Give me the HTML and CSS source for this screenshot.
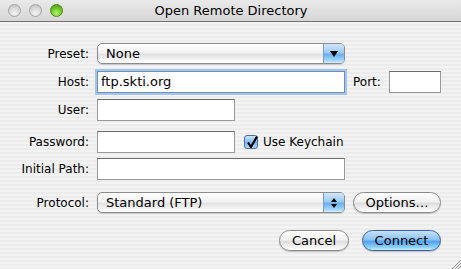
FILE: index.html
```html
<!DOCTYPE html>
<html lang="en">
<head>
  <meta charset="UTF-8">
  <title>Open Remote Directory</title>
  <link rel="stylesheet" href="styles.css">
</head>
<body>
  <div class="window">
    <div class="titlebar">
      <div class="lights">
        <span class="light"></span>
        <span class="light"></span>
        <span class="light green"></span>
      </div>
      <div class="title">Open Remote Directory</div>
    </div>

    <form class="content">
      <div class="row row-preset">
        <label class="lbl">Preset:</label>
        <div class="popup wide">
          <span class="popup-text">None</span>
          <span class="popup-arrow">
            <svg width="10" height="8" viewBox="0 0 10 8"><path d="M1 1 L9 1 L5 7 Z" fill="#000"/></svg>
          </span>
        </div>
      </div>

      <div class="row row-host">
        <label class="lbl">Host:</label>
        <div class="field wide focused">ftp.skti.org</div>
        <label class="lbl-inline">Port:</label>
        <div class="field port"></div>
      </div>

      <div class="row row-user">
        <label class="lbl">User:</label>
        <div class="field short"></div>
      </div>

      <div class="row row-pass">
        <label class="lbl">Password:</label>
        <div class="field short"></div>
        <span class="check">
          <svg width="14" height="14" viewBox="0 0 14 14"><path d="M3 6.5 L6 11 L12 0.5" fill="none" stroke="#000" stroke-width="2.2" stroke-linejoin="round"/></svg>
        </span>
        <span class="check-label">Use Keychain</span>
      </div>

      <div class="row row-path">
        <label class="lbl">Initial Path:</label>
        <div class="field wide"></div>
      </div>

      <div class="row row-proto">
        <label class="lbl">Protocol:</label>
        <div class="popup wide">
          <span class="popup-text">Standard (FTP)</span>
          <span class="popup-arrow">
            <svg width="10" height="14" viewBox="0 0 10 14"><path d="M5 2 L8 6 L2 6 Z M5 12 L8 8 L2 8 Z" fill="#000"/></svg>
          </span>
        </div>
        <button type="button" class="btn options">Options…</button>
      </div>

      <div class="actions">
        <button type="button" class="btn cancel">Cancel</button>
        <button type="button" class="btn connect">Connect</button>
      </div>
    </form>

    <svg class="grip" width="10" height="10" viewBox="0 0 10 10">
      <path d="M10 1 L1 10 M10 4 L4 10 M10 7 L7 10" stroke="#8a8a8a" stroke-width="1"/>
    </svg>
  </div>
</body>
</html>
```

FILE: styles.css
```css
* {
  box-sizing: border-box;
  margin: 0;
  padding: 0;
}
body {
  font-family: "DejaVu Sans", "Liberation Sans", sans-serif;
  font-size: 12px;
  color: #000;
  width: 461px;
  height: 269px;
  overflow: hidden;
}
.window {
  position: relative;
  width: 461px;
  height: 269px;
  background: repeating-linear-gradient(#ececec 0, #ececec 2px, #f3f3f3 2px, #f3f3f3 4px);
}
.titlebar {
  height: 22px;
  display: flex;
  align-items: center;
  background: linear-gradient(#eaeaea, #d6d6d6);
  border-bottom: 1px solid #727272;
  position: relative;
}
.lights {
  display: flex;
  gap: 8px;
  padding-left: 8px;
}
.light {
  width: 13px;
  height: 13px;
  border-radius: 50%;
  border: 1px solid #a5a5a5;
  background: radial-gradient(circle at 50% 75%, #f4f4f4 0, #d8d8d8 55%, #b8b8b8 100%);
}
.light.green {
  border-color: #4c8a1e;
  background: radial-gradient(circle at 50% 75%, #b8f078 0, #72c928 50%, #3f8c10 100%);
}
.title {
  flex: 1;
  text-align: center;
  font-size: 13px;
  margin-right: 62px;
}
.content {
  display: flex;
  flex-direction: column;
}
.row {
  display: flex;
  align-items: center;
}
.lbl {
  width: 89px;
  text-align: right;
  margin-right: 8px;
}
.row-preset { margin-top: 21px; height: 21px; }
.row-host { margin-top: 7px; height: 22px; }
.row-user { margin-top: 6px; height: 22px; }
.row-pass { margin-top: 10px; height: 22px; }
.row-path { margin-top: 5px; height: 22px; }
.row-proto { margin-top: 12px; height: 21px; }

.field {
  height: 22px;
  background: #fff;
  border: 1px solid #9a9a9a;
  border-top-color: #6c6c6c;
  padding: 0 3px;
  line-height: 20px;
  font-size: 13px;
}
.field.wide { width: 248px; }
.field.short { width: 138px; }
.field.port { width: 52px; }
.field.focused {
  border-color: #6d8fc0;
  box-shadow: 0 0 0 2px #a6c4e8;
}
.lbl-inline {
  margin-left: 8px;
  margin-right: 8px;
  width: 28px;
}

.popup {
  height: 21px;
  display: flex;
  border: 1px solid #8c8c8c;
  border-radius: 5px;
  overflow: hidden;
  background: linear-gradient(#ffffff 0, #f3f3f3 45%, #e2e2e2 55%, #f6f6f6 85%, #ffffff 100%);
  box-shadow: 0 1px 1px rgba(0,0,0,0.15);
}
.popup.wide { width: 248px; }
.popup-text {
  flex: 1;
  padding-left: 8px;
  line-height: 19px;
  font-size: 13px;
}
.popup-arrow {
  width: 21px;
  display: flex;
  align-items: center;
  justify-content: center;
  border-left: 1px solid #7c9ccb;
  background: linear-gradient(#d2e6fb 0, #9ccbf6 45%, #6aafef 55%, #a8dcfd 90%, #d8f0ff 100%);
}

.check {
  margin-left: 9px;
  width: 14px;
  height: 14px;
  border: 1px solid #4c6fa6;
  border-radius: 3px;
  background: linear-gradient(#cfe5fb, #7cb8f1 55%, #a9dafd);
  display: flex;
  overflow: visible;
}
.check svg { overflow: visible; }
.check-label {
  margin-left: 5px;
  font-size: 12px;
}

.btn {
  font-family: inherit;
  font-size: 13px;
  height: 21px;
  border-radius: 11px;
  border: 1px solid #8a8a8a;
  background: linear-gradient(#ffffff 0, #f2f2f2 45%, #dedede 55%, #f4f4f4 85%, #ffffff 100%);
  box-shadow: 0 1px 1px rgba(0,0,0,0.2);
  color: #000;
}
.options {
  margin-left: 8px;
  width: 88px;
}
.actions {
  display: flex;
  justify-content: flex-end;
  gap: 13px;
  margin-top: 17px;
  padding-right: 20px;
}
.cancel { width: 70px; }
.connect {
  width: 79px;
  border-color: #3f5f99;
  background: linear-gradient(#c6e1fb 0, #8cc3f5 45%, #55a2ec 55%, #8bd0fb 85%, #c4ecff 100%);
}
.grip {
  position: absolute;
  right: 0;
  bottom: 0;
}
```
